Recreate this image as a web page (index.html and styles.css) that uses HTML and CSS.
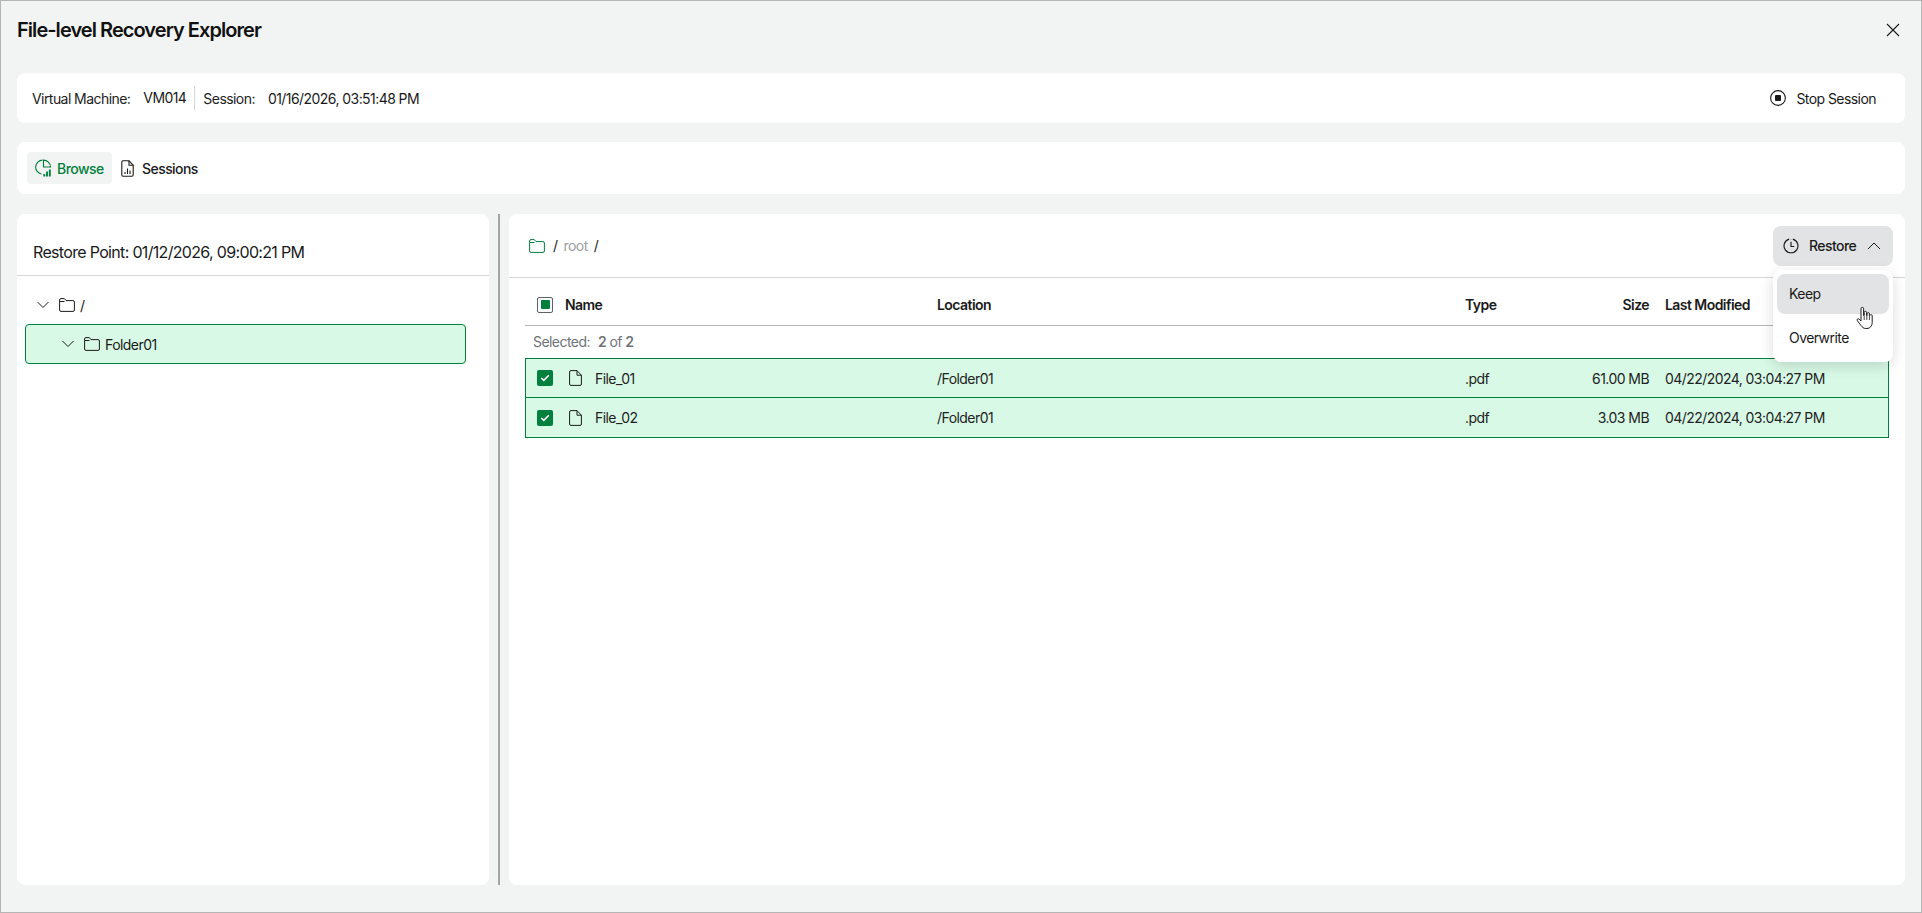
FILE: index.html
```html
<!DOCTYPE html>
<html lang="en">
<head>
<meta charset="utf-8">
<title>File-level Recovery Explorer</title>
<link rel="stylesheet" href="styles.css">
</head>
<body>
<div class="window">
  <header class="title-bar">
    <h1 class="title">File-level Recovery Explorer</h1>
    <svg class="close" width="16" height="16" viewBox="0 0 16 16" fill="none" stroke="#1a1a1a" stroke-width="1.1"><path d="M2 2l12 12M14 2L2 14"/></svg>
  </header>

  <section class="card info">
    <span class="label first">Virtual Machine:</span><span class="value vm">VM014</span>
    <span class="label">Session:</span><span class="value">01/16/2026, 03:51:48 PM</span>
    <span class="stop">
      <svg width="16" height="16" viewBox="0 0 16 16" fill="none"><circle cx="8" cy="8" r="7.4" stroke="#1a1a1a" stroke-width="1.1"/><rect x="5" y="5" width="6" height="6" rx="1" fill="#1a1a1a"/></svg>
      Stop Session
    </span>
  </section>

  <nav class="card tabs">
    <span class="tab active">
      <svg width="17" height="18" viewBox="0 0 17 18" fill="none" stroke="#00803c" stroke-width="1.1"><path d="M7.5 1.100A7 7 0 0 0 6.500 15"/><path d="M8.500 1.100A7 7 0 0 1 15.500 8H8.500z"/><path d="M9.300 17.500v-2.500M12 17.500v-5M14.800 17.500V10.500" stroke-width="1.900"/></svg>
      Browse
    </span>
    <span class="tab">
      <svg width="13" height="17" viewBox="0 0 13 17" fill="none" stroke="#1a1a1a" stroke-width="1.1"><path d="M2 .8h6l4.200 4.400V15a1.300 1.300 0 0 1-1.300 1.200H2A1.300 1.300 0 0 1 .8 15V2A1.300 1.300 0 0 1 2 .8z"/><path d="M8 .8v4.400h4.200"/><path d="M4 14v-2M6.500 14V8.500M9 14v-3.500"/></svg>
      Sessions
    </span>
  </nav>

  <main class="panes">
    <aside class="card tree-pane">
      <div class="restore-point">Restore Point: 01/12/2026, 09:00:21 PM</div>
      <div class="tree">
        <div class="tree-row root">
          <svg class="chev" width="14" height="8" viewBox="0 0 14 8" fill="none" stroke="#1a1a1a" stroke-width="1"><path d="M1.500 1l5.500 5.500L12.500 1"/></svg>
          <svg width="16" height="14" viewBox="0 0 16 14" fill="none" stroke="#1a1a1a" stroke-width="1"><path d="M.6 3.500V2A1.400 1.400 0 0 1 2 .6h3.300L7 2.600h7a1.400 1.400 0 0 1 1.400 1.400v8A1.400 1.400 0 0 1 14 13.400H2A1.400 1.400 0 0 1 .6 12zh4.900"/></svg>
          <span>/</span>
        </div>
        <div class="tree-row selected">
          <svg class="chev" width="14" height="8" viewBox="0 0 14 8" fill="none" stroke="#1a1a1a" stroke-width="1"><path d="M1.500 1l5.500 5.500L12.500 1"/></svg>
          <svg width="16" height="14" viewBox="0 0 16 14" fill="none" stroke="#1a1a1a" stroke-width="1"><path d="M.6 3.500V2A1.400 1.400 0 0 1 2 .6h3.300L7 2.600h7a1.400 1.400 0 0 1 1.400 1.400v8A1.400 1.400 0 0 1 14 13.400H2A1.400 1.400 0 0 1 .6 12zh4.900"/></svg>
          <span>Folder01</span>
        </div>
      </div>
    </aside>

    <div class="divider"></div>

    <section class="card files">
      <div class="crumbs">
        <svg width="16" height="14" viewBox="0 0 16 14" fill="none" stroke="#00803c" stroke-width="1"><path d="M.6 3.500V2A1.400 1.400 0 0 1 2 .6h3.300L7 2.600h7a1.400 1.400 0 0 1 1.400 1.400v8A1.400 1.400 0 0 1 14 13.400H2A1.400 1.400 0 0 1 .6 12zh4.900"/></svg>
        <span>/</span><span class="muted">root</span><span>/</span>
        <button class="restore">
          <svg width="16" height="16" viewBox="0 0 17 17" fill="none" stroke="#1a1a1a" stroke-width="1.200"><path d="M10.500 1.200A7.400 7.400 0 1 1 6.500 1.200"/><path d="M8.500 4v5h3.400"/><path d="M8.500 1v.4M12 2.200l-.3.4"/></svg>
          Restore
          <svg class="chev-up" width="14" height="8" viewBox="0 0 14 8" fill="none" stroke="#1a1a1a" stroke-width="1"><path d="M1 7l6-6 6 6"/></svg>
        </button>
      </div>

      <div class="table">
        <div class="row head">
          <span class="check-col"><span class="box partial"></span></span>
          <span class="name">Name</span>
          <span>Location</span>
          <span>Type</span>
          <span class="size">Size</span>
          <span>Last Modified</span>
        </div>
        <div class="selected-count">Selected:<b>2</b> of <b>2</b></div>
        <div class="row item">
          <span class="check-col"><span class="box checked"><svg width="10" height="8" viewBox="0 0 10 8" fill="none" stroke="#fff" stroke-width="1.600"><path d="M1.200 4l2.600 2.400L8.800 1.200"/></svg></span></span>
          <span class="name file">
            <svg width="13" height="16" viewBox="0 0 13 16" fill="none" stroke="#1a1a1a" stroke-width="1"><path d="M2 .6h6l4.400 4.600V14A1.400 1.400 0 0 1 11 15.400H2A1.400 1.400 0 0 1 .6 14V2A1.400 1.400 0 0 1 2 .6z"/><path d="M8 .6v4.600h4.400"/></svg>
            File_01
          </span>
          <span>/Folder01</span>
          <span>.pdf</span>
          <span class="size">61.00 MB</span>
          <span>04/22/2024, 03:04:27 PM</span>
        </div>
        <div class="row item">
          <span class="check-col"><span class="box checked"><svg width="10" height="8" viewBox="0 0 10 8" fill="none" stroke="#fff" stroke-width="1.600"><path d="M1.200 4l2.600 2.400L8.800 1.200"/></svg></span></span>
          <span class="name file">
            <svg width="13" height="16" viewBox="0 0 13 16" fill="none" stroke="#1a1a1a" stroke-width="1"><path d="M2 .6h6l4.400 4.600V14A1.400 1.400 0 0 1 11 15.400H2A1.400 1.400 0 0 1 .6 14V2A1.400 1.400 0 0 1 2 .6z"/><path d="M8 .6v4.600h4.400"/></svg>
            File_02
          </span>
          <span>/Folder01</span>
          <span>.pdf</span>
          <span class="size">3.03 MB</span>
          <span>04/22/2024, 03:04:27 PM</span>
        </div>
      </div>

      <div class="menu">
        <div class="menu-item hover">Keep</div>
        <div class="menu-item">Overwrite</div>
      </div>
      <svg class="cursor" width="18" height="25" viewBox="0 0 18 24"><path d="M5 2.200a1.300 1.300 0 0 1 2.600 0V9l.6-.2V6a1.200 1.200 0 0 1 2.400 0v3l.5-.1V7a1.200 1.200 0 0 1 2.300 0v2l.5-.1a1.200 1.200 0 0 1 2.300.3V16c0 3.300-2.200 6-5.300 6H9.800C7.500 22 6.400 20.800 5 19L1.300 14.200c-.9-1.300.8-2.600 1.900-1.500L5 14.500z" fill="#fff" stroke="#1a1a1a" stroke-width="1"/><path d="M8.200 9v4.500M10.800 9v4.500M13.400 9v4.500" stroke="#1a1a1a" stroke-width=".8"/></svg>
    </section>
  </main>
</div>
</body>
</html>
```
FILE: styles.css
```css
* { box-sizing: border-box; }
html, body { margin: 0; height: 100%; }
body { font-family: Inter, "Liberation Sans", sans-serif; font-size: 14px; letter-spacing: -0.04em; color: #1a1a1a; background: #f2f4f3; }
.window { height: 913px; width: 1922px; border: 1px solid #b4b6b6; background: #f2f4f3; padding: 0 16px; display: flex; flex-direction: column; }
.title-bar { height: 72px; display: flex; align-items: center; justify-content: space-between; padding: 0 0 15px; }
.title { margin: 0; font-size: 20px; font-weight: 600; color: #111; letter-spacing: -0.0475em; }
.close { margin-right: 4px; }
.card { background: #fff; border-radius: 8px; }
.info { height: 50px; flex: none; display: flex; align-items: center; padding: 0 16px 0 15px; font-size: 14px; }
.label { margin-right: 13px; color: #222; }
.vm { padding-right: 8px; margin-right: 8px; border-right: 1px solid #d5d6d6; height: 24px; line-height: 24px; }
.stop { margin-left: auto; margin-right: 13px; display: flex; align-items: center; gap: 10px; }
.tabs { margin-top: 19px; height: 52px; flex: none; display: flex; align-items: center; padding: 0 10px; gap: 9px; }
.tab { display: flex; align-items: center; gap: 5px; height: 32px; padding: 0 8px; border-radius: 4px; font-size: 14px; font-weight: 500; }
.tab.active { background: #f2f4f3; color: #00803c; width: 85px; }
.tab + .tab { padding: 0; gap: 8px; }
.panes { margin-top: 20px; height: 671px; flex: none; display: flex; }
.tree-pane { width: 472px; flex: none; }
.restore-point { height: 62px; padding: 26px 16px 0; font-size: 16px; letter-spacing: -0.042em; border-bottom: 1px solid #d5d6d6; line-height: 24px; }
.tree { padding: 13px 23px 0 8px; }
.tree-row { height: 40px; display: flex; align-items: center; gap: 5px; border: 1px solid transparent; border-radius: 4px; padding-left: 10px; }
.tree-row.root { height: 32px; }
.chev { margin-right: 4px; }
.tree-row.selected { background: #d8f9e6; border-color: #00803c; padding-left: 35px; margin-top: 3px; }
.divider { width: 2px; background: #a2a4a6; margin: 0 9px 0 9px; }
.files { flex: 1; position: relative; }
.crumbs { height: 64px; display: flex; align-items: center; gap: 6px; padding: 0 12px 0 20px; border-bottom: 1px solid #d5d6d6; }
.crumbs svg:first-child { margin-right: 2px; }
.muted { color: #9a9ea2; }
.restore { margin-left: auto; width: 120px; height: 40px; border: 0; border-radius: 8px; background: #e2e3e5; font: 500 14px Inter, "Liberation Sans", sans-serif; letter-spacing: -0.04em; color: #1a1a1a; display: flex; align-items: center; padding: 0 10px; gap: 8px; }
.chev-up { margin-left: 3px; }
.table { padding: 0 16px; }
.row { display: grid; grid-template-columns: 28px 372px 528px 128px 56px 1fr; align-items: center; padding-left: 12px; white-space: nowrap; }
.size { text-align: right; justify-self: end; }
.row > span:last-child { padding-left: 16px; }
.row.head { height: 48px; font-weight: 600; border-bottom: 1px solid #b4b6b6; font-size: 14px; padding-top: 6px; }
.check-col { display: flex; }
.box { width: 16px; height: 16px; border-radius: 2px; display: flex; align-items: center; justify-content: center; }
.box.partial { border: 1px solid #5b6168; }
.box.partial::after { content: ""; width: 9px; height: 9px; background: #00803c; border-radius: 1px; }
.box.checked { background: #00803c; }
.selected-count { height: 32px; padding-left: 8px; padding-top: 6px; color: #6e7378; line-height: 20px; }
.selected-count b { font-weight: 600; }
.selected-count b:first-of-type { margin-left: 8px; }
.row.item { height: 40px; background: #d8f9e6; border: 1px solid #00803c; padding-left: 11px; color: #222; }
.row.item + .row.item { margin-top: -1px; height: 41px; }
.file { display: flex; align-items: center; gap: 13px; padding-left: 4px; }
.menu { position: absolute; left: 1264px; top: 56px; width: 120px; height: 92px; background: #fff; border-radius: 8px; padding: 4px; box-shadow: 0 4px 14px rgba(0,0,0,.14); }
.menu-item { height: 40px; padding-left: 12px; line-height: 40px; border-radius: 8px; margin-bottom: 4px; }
.menu-item.hover { background: #e2e3e5; }
.cursor { position: absolute; left: 1347px; top: 92px; }
```
